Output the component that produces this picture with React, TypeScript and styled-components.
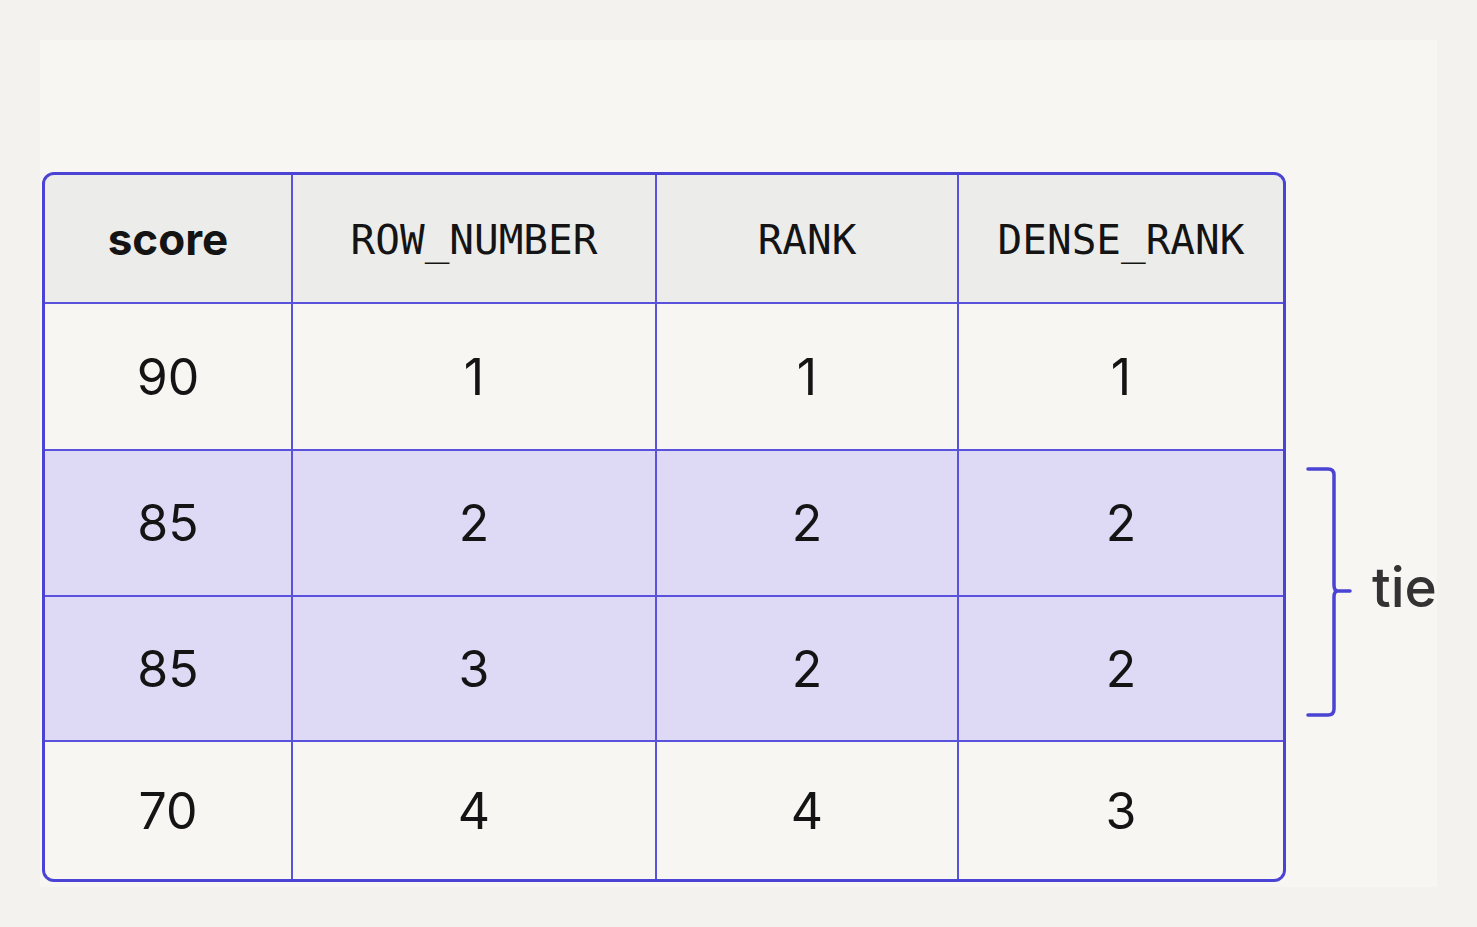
import styled, { createGlobalStyle } from 'styled-components';

const GlobalStyle = createGlobalStyle`
  html, body {
    margin: 0;
    padding: 0;
    background: #f3f2ef;
  }
  body {
    font-family: Inter, "Liberation Sans", sans-serif;
  }
`;

const Page = styled.div`
  width: 1477px;
  height: 927px;
  padding: 40px;
  box-sizing: border-box;
`;

const Panel = styled.div`
  width: 1397px;
  height: 847px;
  background: #f7f6f3;
  box-sizing: border-box;
  padding: 132px 0 0 2px;
  display: flex;
  align-items: flex-start;
`;

const TableFrame = styled.div`
  width: 1244px;
  border: 3px solid #4b43d3;
  border-radius: 12px;
  overflow: hidden;
  box-sizing: border-box;
`;

const Grid = styled.div`
  display: grid;
  grid-template-columns: 246px 362px 300px 324px;
  grid-template-rows: 127px 145px 144px 143px 137px;
  gap: 2px;
  background: #5a52dc;
`;

const HeadCell = styled.div<{ $mono?: boolean }>`
  background: #ececea;
  display: flex;
  align-items: center;
  justify-content: center;
  color: #141414;
  font-family: ${p => (p.$mono ? '"DejaVu Sans Mono", "Liberation Mono", monospace' : 'Inter, "Liberation Sans", sans-serif')};
  font-size: ${p => (p.$mono ? '41px' : '44px')};
  font-weight: ${p => (p.$mono ? 400 : 700)};
  padding-top: ${p => (p.$mono ? '2px' : '0')};
`;

const Cell = styled.div<{ $tie?: boolean }>`
  background: ${p => (p.$tie ? '#dedaf6' : '#f7f6f3')};
  display: flex;
  align-items: center;
  justify-content: center;
  color: #141414;
  font-family: Inter, "Liberation Sans", sans-serif;
  font-size: 50px;
  font-weight: 400;
`;

const Side = styled.div`
  display: flex;
  align-items: center;
  gap: 18px;
  margin: 294px 0 0 20px;
`;

const TieLabel = styled.span`
  font-family: Inter, "Liberation Sans", sans-serif;
  font-size: 55px;
  font-weight: 500;
  color: #333333;
  padding-bottom: 10px;
`;

const headers = ['ROW_NUMBER', 'RANK', 'DENSE_RANK'];

const rows = [
  { score: 90, values: [1, 1, 1], tie: false },
  { score: 85, values: [2, 2, 2], tie: true },
  { score: 85, values: [3, 2, 2], tie: true },
  { score: 70, values: [4, 4, 3], tie: false },
];

const Bracket = () => (
  <svg width="48" height="252" viewBox="0 0 48 252" fill="none">
    <path
      d="M2 3 H22 Q28 3 28 9 V119 Q28 125 32 125 H44 M32 125 Q28 125 28 131 V243 Q28 249 22 249 H2"
      stroke="#4b43d3"
      strokeWidth="3.5"
      strokeLinecap="round"
      strokeLinejoin="round"
    />
  </svg>
);

export default function App() {
  return (
    <>
      <GlobalStyle />
      <Page>
        <Panel>
          <TableFrame>
            <Grid>
              <HeadCell>score</HeadCell>
              {headers.map(h => (
                <HeadCell key={h} $mono>
                  {h}
                </HeadCell>
              ))}
              {rows.map((r, i) => [
                <Cell key={`s${i}`} $tie={r.tie}>
                  {r.score}
                </Cell>,
                ...r.values.map((v, j) => (
                  <Cell key={`v${i}-${j}`} $tie={r.tie}>
                    {v}
                  </Cell>
                )),
              ])}
            </Grid>
          </TableFrame>
          <Side>
            <Bracket />
            <TieLabel>tie</TieLabel>
          </Side>
        </Panel>
      </Page>
    </>
  );
}
